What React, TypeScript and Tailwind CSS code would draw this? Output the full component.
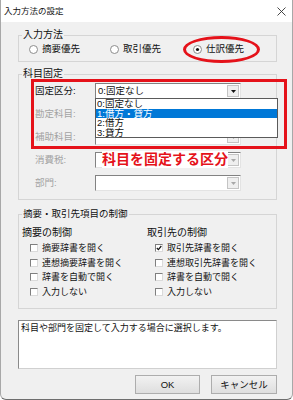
import type { ReactNode } from "react"

const Radio = ({ checked, label }: { checked?: boolean; label: string }) => (
  <div className="flex items-center gap-[4px]">
    <svg width="9" height="9" viewBox="0 0 9 9">
      <circle cx="4.5" cy="4.5" r="4" fill="#fff" stroke="#8c8c8c" strokeWidth="1" />
      {checked && <circle cx="4.5" cy="4.5" r="1.6" fill="#111" />}
    </svg>
    <span className="text-[9.5px] leading-[12px] text-[#111]">{label}</span>
  </div>
)

const Check = ({ checked, label }: { checked?: boolean; label: string }) => (
  <div className="flex h-[14.5px] items-center gap-[4px] pl-[8px]">
    <div className="relative h-[8px] w-[8px] border border-t-[#7f7f7f] border-l-[#7f7f7f] border-b-[#dadada] border-r-[#dadada] bg-white">
      {checked && (
        <svg className="absolute left-0 top-0" width="6" height="6" viewBox="0 0 6 6">
          <path d="M0.8 3 L2.4 4.6 L5.3 1" fill="none" stroke="#111" strokeWidth="1.2" />
        </svg>
      )}
    </div>
    <span className="text-[9px] leading-[12px] text-[#111]">{label}</span>
  </div>
)

const Arrow = ({ disabled }: { disabled?: boolean }) => (
  <div className="flex h-full w-[12px] items-center justify-center border border-[#c4c4c4] bg-[#efefef]">
    <svg width="5" height="3" viewBox="0 0 5 3">
      <path d="M0 0 H5 L2.5 3 Z" fill={disabled ? "#a8a8a8" : "#111"} />
    </svg>
  </div>
)

const Combo = ({ disabled, value, children }: { disabled?: boolean; value?: string; children?: ReactNode }) => (
  <div className="relative flex h-[16px] w-[146px] items-stretch border border-t-[#828282] border-l-[#828282] border-b-[#e3e3e3] border-r-[#e3e3e3] bg-white">
    <div className="flex-1 pl-[2px] text-[9.5px] leading-[14px] text-[#111]">{value}</div>
    <div className="py-[1px] pr-[1px]">
      <Arrow disabled={disabled} />
    </div>
    {children}
  </div>
)

const Row = ({ label, disabled, value, children }: { label: string; disabled?: boolean; value?: string; children?: ReactNode }) => (
  <div className="flex h-[16px] items-center">
    <div className={`w-[76px] pl-[16px] text-[9.5px] leading-[12px] ${disabled ? "text-[#a3a3a3]" : "text-[#111]"}`}>{label}</div>
    <Combo disabled={disabled} value={value}>
      {children}
    </Combo>
  </div>
)

export default function App() {
  return (
    <div className="relative flex h-[400px] w-[293px] flex-col overflow-hidden rounded-b-[6px] border-x border-b border-x-[#a8a8a8] border-b-[#6e6e6e] bg-[#f0f0f0] font-['Liberation_Sans','Noto_Sans_CJK_JP',sans-serif]">
      {/* title bar */}
      <div className="flex h-[22px] items-center justify-between bg-white pl-[3px] pr-[6px]">
        <span className="text-[8.5px] leading-[12px] text-[#111]">入力方法の設定</span>
        <svg width="9" height="9" viewBox="0 0 9 9">
          <path d="M0.5 0.5 L8.5 8.5 M8.5 0.5 L0.5 8.5" stroke="#333" strokeWidth="0.9" />
        </svg>
      </div>

      <div className="flex flex-col pl-[17px]">
        {/* 入力方法 */}
        <fieldset className="mt-[7px] w-[259px] border border-[#d5d5d5] px-0 pb-[6px]">
          <legend className="ml-[3px] px-[1px] text-[10px] leading-[12px] text-[#111]">入力方法</legend>
          <div className="flex pt-[2px] pl-[10px]">
            <div className="w-[81px]"><Radio label="摘要優先" /></div>
            <div className="w-[83px]"><Radio label="取引優先" /></div>
            <div><Radio checked label="仕訳優先" /></div>
          </div>
        </fieldset>

        {/* 科目固定 */}
        <fieldset className="mt-[6px] w-[259px] border border-[#d5d5d5] px-0 pb-[8px]">
          <legend className="ml-[3px] px-[1px] text-[10px] leading-[12px] text-[#111]">科目固定</legend>
          <div className="flex flex-col gap-[7px] pt-[3px]">
            <Row label="固定区分:" value="0:固定なし">
              <div className="absolute left-[-1px] top-[14px] z-10 w-[183px] border border-[#5a5a5a] bg-white text-[9.5px] leading-[9.5px] text-[#111]">
                <div className="h-[9.5px] pl-[1px]">0:固定なし</div>
                <div className="h-[9.5px] bg-[#0078d7] pl-[1px] text-white">1:借方・貸方</div>
                <div className="h-[9.5px] pl-[1px]">2:借方</div>
                <div className="h-[9.5px] pl-[1px]">3:貸方</div>
              </div>
            </Row>
            <Row label="勘定科目:" disabled />
            <Row label="補助科目:" disabled />
            <Row label="消費税:" disabled>
              <span className="absolute left-[6px] top-[-2px] bg-white text-[14px] font-bold leading-[17px] text-[#e5121a]">科目を固定する区分</span>
            </Row>
            <Row label="部門:" disabled />
          </div>
        </fieldset>

        {/* 摘要・取引先項目の制御 */}
        <fieldset className="mt-[8px] w-[259px] border border-[#d5d5d5] px-0 pb-[9px]">
          <legend className="ml-[3px] px-[1px] text-[9.5px] leading-[12px] text-[#111]">摘要・取引先項目の制御</legend>
          <div className="flex pt-[6px] pl-[3px]">
            <div className="flex w-[125px] flex-col">
              <div className="mb-[1px] h-[14px] text-[10px] leading-[14px] text-[#111]">摘要の制御</div>
              <Check label="摘要辞書を開く" />
              <Check label="連想摘要辞書を開く" />
              <Check label="辞書を自動で開く" />
              <Check label="入力しない" />
            </div>
            <div className="flex flex-col">
              <div className="mb-[1px] h-[14px] text-[10px] leading-[14px] text-[#111]">取引先の制御</div>
              <Check checked label="取引先辞書を開く" />
              <Check label="連想取引先辞書を開く" />
              <Check label="辞書を自動で開く" />
              <Check label="入力しない" />
            </div>
          </div>
        </fieldset>

        {/* description */}
        <div className="mt-[11px] h-[49px] w-[259px] border border-t-[#8a8a8a] border-l-[#8a8a8a] border-b-[#d0d0d0] border-r-[#d0d0d0] bg-white px-[2px] pt-[1px] text-[9px] leading-[12px] text-[#111]">
          科目や部門を固定して入力する場合に選択します。
        </div>

        {/* buttons */}
        <div className="mt-[6px] flex w-[259px] justify-end gap-[11px]">
          <button className="h-[19px] w-[65px] border border-[#adadad] bg-gradient-to-b from-[#f2f2f2] to-[#dedede] text-[9.5px] leading-[17px] text-[#111]">OK</button>
          <button className="h-[19px] w-[66px] border border-[#adadad] bg-gradient-to-b from-[#f2f2f2] to-[#dedede] text-[9.5px] leading-[17px] text-[#111]">キャンセル</button>
        </div>
      </div>

      {/* annotations */}
      <div className="absolute left-[182px] top-[36px] h-[27px] w-[77px] rounded-[50%] border-[3px] border-[#e5121a]" />
      <div className="absolute left-[30px] top-[79px] z-20 h-[70px] w-[256px] border-[3px] border-[#e5121a]" />
    </div>
  )
}
